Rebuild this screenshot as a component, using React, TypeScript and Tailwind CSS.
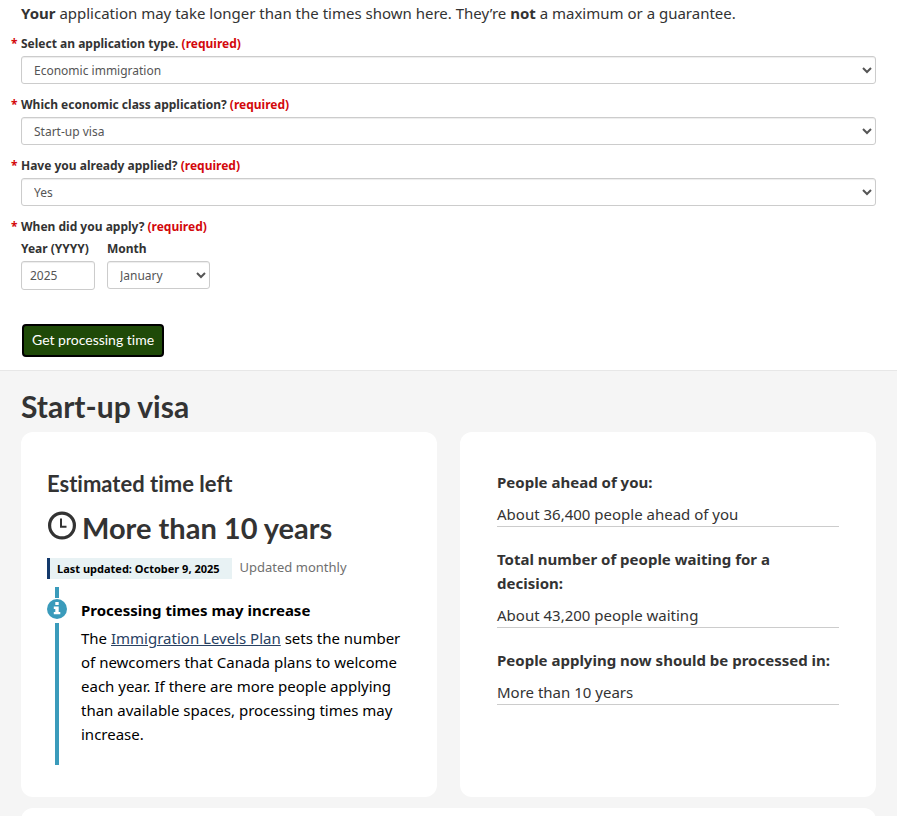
import type { ReactNode } from 'react'

const MONTHS = [
  'January',
  'February',
  'March',
  'April',
  'May',
  'June',
  'July',
  'August',
  'September',
  'October',
  'November',
  'December',
]

const STATS = [
  { label: 'People ahead of you:', value: 'About 36,400 people ahead of you' },
  {
    label: 'Total number of people waiting for a decision:',
    value: 'About 43,200 people waiting',
  },
  {
    label: 'People applying now should be processed in:',
    value: 'More than 10 years',
  },
]

export default function App(): JSX.Element {
  return (
    <main className="min-h-screen bg-[#f5f5f5] font-['Noto_Sans',sans-serif] text-[15px] leading-6 text-[#333] [font-variant-ligatures:none]">
      <form
        className="border-b border-[#e7e7e7] bg-white px-[21px] pt-px pb-[13px]"
        onSubmit={(e) => e.preventDefault()}
      >
        <p className="mb-[9px]">
          <strong>Your</strong> application may take longer than the times shown
          here. They’re <strong>not</strong> a maximum or a guarantee.
        </p>
        <SelectField
          id="application-type"
          label="Select an application type."
          options={['Economic immigration', 'Family sponsorship', 'Refugees']}
        />
        <SelectField
          id="economic-class"
          label="Which economic class application?"
          options={['Start-up visa', 'Express Entry', 'Self-employed persons']}
        />
        <SelectField
          id="already-applied"
          label="Have you already applied?"
          options={['Yes', 'No']}
        />
        <fieldset>
          <legend className="relative text-[12px] leading-5 font-bold">
            <Required>When did you apply?</Required>
          </legend>
          <div className="mt-0.5 flex gap-3">
            <div className="w-[74px]">
              <label
                htmlFor="year"
                className="mb-0.5 block text-[12px] leading-5 font-bold whitespace-nowrap"
              >
                Year (YYYY)
              </label>
              <input
                id="year"
                type="text"
                defaultValue="2025"
                className="block h-[29px] w-full rounded-[3px] border border-[#ccc] px-2 text-[12px] text-[#555] shadow-[inset_0_1px_1px_rgba(0,0,0,0.075)]"
              />
            </div>
            <div className="w-[103px]">
              <label
                htmlFor="month"
                className="mb-0.5 block text-[12px] leading-5 font-bold"
              >
                Month
              </label>
              <Select id="month" options={MONTHS} />
            </div>
          </div>
        </fieldset>
        <button
          type="submit"
          className="mt-[34px] ml-px block h-[33px] rounded-[4px] border-2 border-black bg-[#1f4a08] px-2 pb-0.5 font-['Lato',sans-serif] text-[14px] leading-5 text-white"
        >
          Get processing time
        </button>
      </form>

      <section className="px-[21px] pt-[17px]">
        <h2 className="mb-2 font-['Lato',sans-serif] text-[30px] leading-9 font-bold">
          Start-up visa
        </h2>
        <div className="grid grid-cols-2 gap-x-[23px] gap-y-[11px]">
          <EstimateCard />
          <StatsCard />
          <div className="col-span-2 h-16 rounded-xl bg-white" />
        </div>
      </section>
    </main>
  )
}

function EstimateCard(): JSX.Element {
  return (
    <div className="rounded-xl bg-white px-[26px] pt-9 pb-8">
      <h3 className="font-['Lato',sans-serif] text-[22px] leading-8 font-bold">
        Estimated time left
      </h3>
      <p className="mt-2 flex h-10 items-center gap-1.5 font-['Lato',sans-serif] text-[29px] leading-10 font-bold">
        <ClockIcon />
        More than 10 years
      </p>
      <p className="mt-2.5 flex items-start gap-2 text-[13px] leading-[18px]">
        <span className="border-l-[3px] border-[#13396b] bg-[#e8f2f4] pr-3 pl-[7px] text-[11px] leading-[21px] font-bold text-black">
          Last updated: October 9, 2025
        </span>
        <span className="text-[#6f6f6f]">Updated monthly</span>
      </p>
      <div className="mt-2 flex gap-[14px] text-black">
        <div className="flex w-5 shrink-0 flex-col items-center">
          <span className="h-[11px] w-1 bg-[#3a9bbb]" />
          <InfoIcon />
          <span className="mt-1 w-1 grow bg-[#3a9bbb]" />
        </div>
        <div className="pt-[11px] pb-[19px]">
          <h4 className="mb-1 font-bold">Processing times may increase</h4>
          <p>
            The{' '}
            <a href="#levels-plan" className="text-[#284162] underline">
              Immigration Levels Plan
            </a>{' '}
            sets the number of newcomers that Canada plans to welcome each year.
            If there are more people applying than available spaces, processing
            times may increase.
          </p>
        </div>
      </div>
    </div>
  )
}

function StatsCard(): JSX.Element {
  return (
    <dl className="rounded-xl bg-white px-[37px] pt-[38px]">
      {STATS.map(({ label, value }) => (
        <div className="mb-5" key={label}>
          <dt className="mb-2 font-bold">{label}</dt>
          <dd className="border-b border-[#ccc]">{value}</dd>
        </div>
      ))}
    </dl>
  )
}

interface SelectProps {
  id: string
  options: string[]
}

function Select({ id, options }: SelectProps): JSX.Element {
  return (
    <select
      id={id}
      className="block h-7 w-full rounded-[3px] border border-[#ccc] bg-white pl-2 text-[12px] text-[#555] shadow-[inset_0_1px_1px_rgba(0,0,0,0.075)]"
    >
      {options.map((option) => (
        <option key={option}>{option}</option>
      ))}
    </select>
  )
}

function SelectField({
  id,
  label,
  options,
}: SelectProps & { label: string }): JSX.Element {
  return (
    <div className="mb-[11px]">
      <label
        htmlFor={id}
        className="relative mb-0.5 block text-[12px] leading-5 font-bold"
      >
        <Required>{label}</Required>
      </label>
      <Select id={id} options={options} />
    </div>
  )
}

function Required({ children }: { children: ReactNode }): JSX.Element {
  return (
    <>
      <span className="absolute -left-2.5 text-[#d3080c]">*</span>
      {children} <span className="text-[#d3080c]">(required)</span>
    </>
  )
}

function ClockIcon(): JSX.Element {
  return (
    <svg
      className="mb-1.5 size-[29px]"
      viewBox="0 0 29 29"
      fill="none"
      stroke="currentColor"
      aria-hidden="true"
    >
      <circle cx="15" cy="14.5" r="12.4" strokeWidth="3.2" />
      <path d="M14 7.5V15.7H19.5" strokeWidth="2" />
    </svg>
  )
}

function InfoIcon(): JSX.Element {
  return (
    <svg className="mt-px size-5" viewBox="0 0 20 20" aria-hidden="true">
      <circle cx="10" cy="10" r="10" fill="#3a9bbb" />
      <path
        d="M8.3 3h3.4v3H8.3zM6.8 7.6h4.9v5.3h1.6v2.4H6.8v-2.4h1.5V10H6.8z"
        fill="#fff"
      />
    </svg>
  )
}
